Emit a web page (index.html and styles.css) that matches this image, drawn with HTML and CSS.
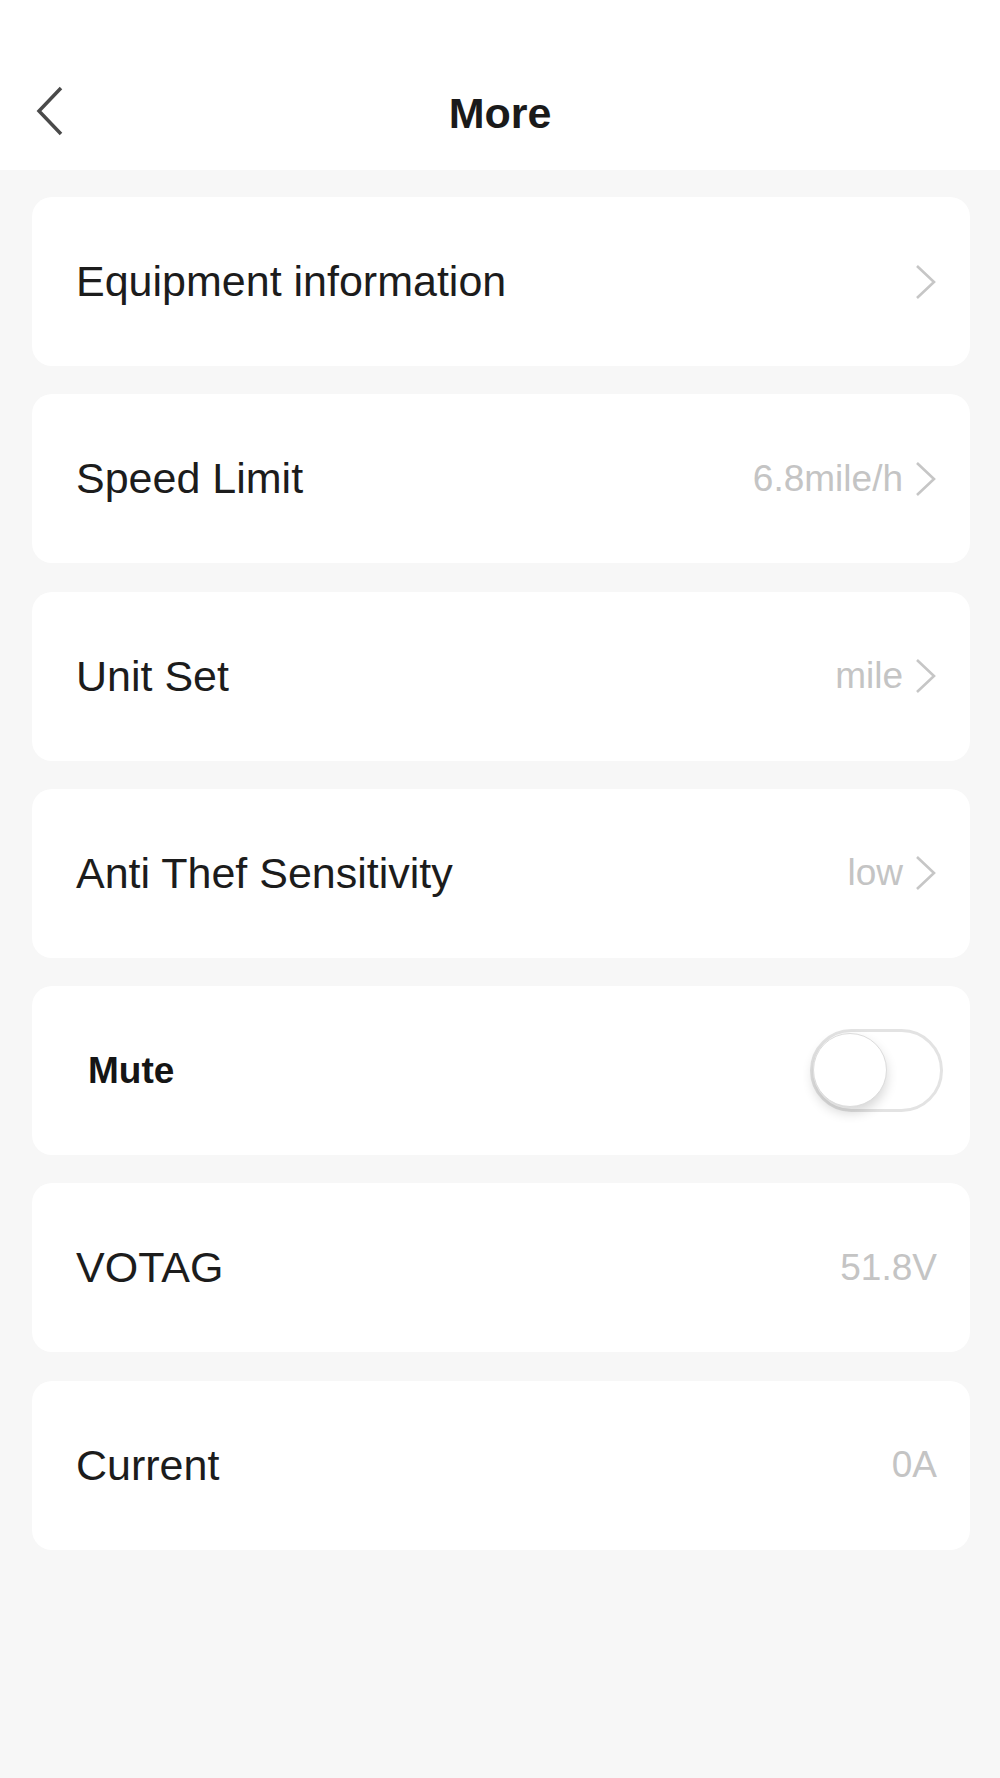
FILE: index.html
```html
<!DOCTYPE html>
<html lang="en">
<head>
    <meta charset="UTF-8">
    <meta name="viewport" content="width=device-width, initial-scale=1.0">
    <title>More</title>
    <link rel="stylesheet" href="styles.css">
</head>
<body>
    <div class="header">
        <a class="back" href="#">
            <svg width="28" height="50" viewBox="0 0 28 50"><polyline points="25,2 3,25 25,48" fill="none" stroke="#4a4a4a" stroke-width="3.5"/></svg>
        </a>
        <h1>More</h1>
    </div>

    <div class="list">
        <div class="row">
            <span class="label">Equipment information</span>
            <span class="right">
                <svg class="arrow" width="22" height="36" viewBox="0 0 22 36"><polyline points="2,2 19,18 2,34" fill="none" stroke="#c6c6c6" stroke-width="2.6"/></svg>
            </span>
        </div>
        <div class="row">
            <span class="label">Speed Limit</span>
            <span class="right">
                <span class="value">6.8mile/h</span>
                <svg class="arrow" width="22" height="36" viewBox="0 0 22 36"><polyline points="2,2 19,18 2,34" fill="none" stroke="#c6c6c6" stroke-width="2.6"/></svg>
            </span>
        </div>
        <div class="row">
            <span class="label">Unit Set</span>
            <span class="right">
                <span class="value">mile</span>
                <svg class="arrow" width="22" height="36" viewBox="0 0 22 36"><polyline points="2,2 19,18 2,34" fill="none" stroke="#c6c6c6" stroke-width="2.6"/></svg>
            </span>
        </div>
        <div class="row">
            <span class="label">Anti Thef Sensitivity</span>
            <span class="right">
                <span class="value">low</span>
                <svg class="arrow" width="22" height="36" viewBox="0 0 22 36"><polyline points="2,2 19,18 2,34" fill="none" stroke="#c6c6c6" stroke-width="2.6"/></svg>
            </span>
        </div>
        <div class="row row-switch">
            <span class="label bold">Mute</span>
            <span class="toggle"><span class="knob"></span></span>
        </div>
        <div class="row">
            <span class="label">VOTAG</span>
            <span class="right"><span class="value">51.8V</span></span>
        </div>
        <div class="row">
            <span class="label">Current</span>
            <span class="right"><span class="value">0A</span></span>
        </div>
    </div>
</body>
</html>
```

FILE: styles.css
```css
body {
    font-family: 'Liberation Sans', Arial, sans-serif;
    background-color: #f7f7f7;
    margin: 0;
    padding: 0;
    color: #1c1c1c;
}
.header {
    background-color: #ffffff;
    height: 170px;
    position: relative;
    display: flex;
    align-items: center;
    justify-content: center;
    padding-top: 56px;
    box-sizing: border-box;
}
.back {
    position: absolute;
    left: 36px;
    top: 86px;
    display: block;
    line-height: 0;
}
h1 {
    margin: 0;
    font-size: 43px;
    font-weight: bold;
    color: #1a1a1a;
}
.list {
    display: flex;
    flex-direction: column;
    gap: 28.3px;
    margin: 27px 30px 0 32px;
}
.row {
    background-color: #ffffff;
    height: 169px;
    border-radius: 20px;
    display: flex;
    align-items: center;
    justify-content: space-between;
    padding: 0 33px 0 44px;
}
.label {
    font-size: 43px;
}
.label.bold {
    font-size: 37px;
    font-weight: bold;
    padding-left: 12px;
    color: #151515;
}
.right {
    display: flex;
    align-items: center;
    gap: 12px;
}
.value {
    font-size: 37px;
    color: #c4c4c4;
}
.arrow {
    display: block;
}
.row-switch {
    padding-right: 27px;
}
.toggle {
    position: relative;
    width: 133px;
    height: 83px;
    border: 3px solid #e3e3e3;
    border-radius: 42px;
    box-sizing: border-box;
    background-color: #ffffff;
}
.knob {
    position: absolute;
    left: 0;
    top: 1px;
    width: 74px;
    height: 74px;
    border-radius: 50%;
    background-color: #ffffff;
    border: 1px solid #dcdcdc;
    box-sizing: border-box;
    box-shadow: 0 6px 12px rgba(0, 0, 0, 0.16);
}
```
